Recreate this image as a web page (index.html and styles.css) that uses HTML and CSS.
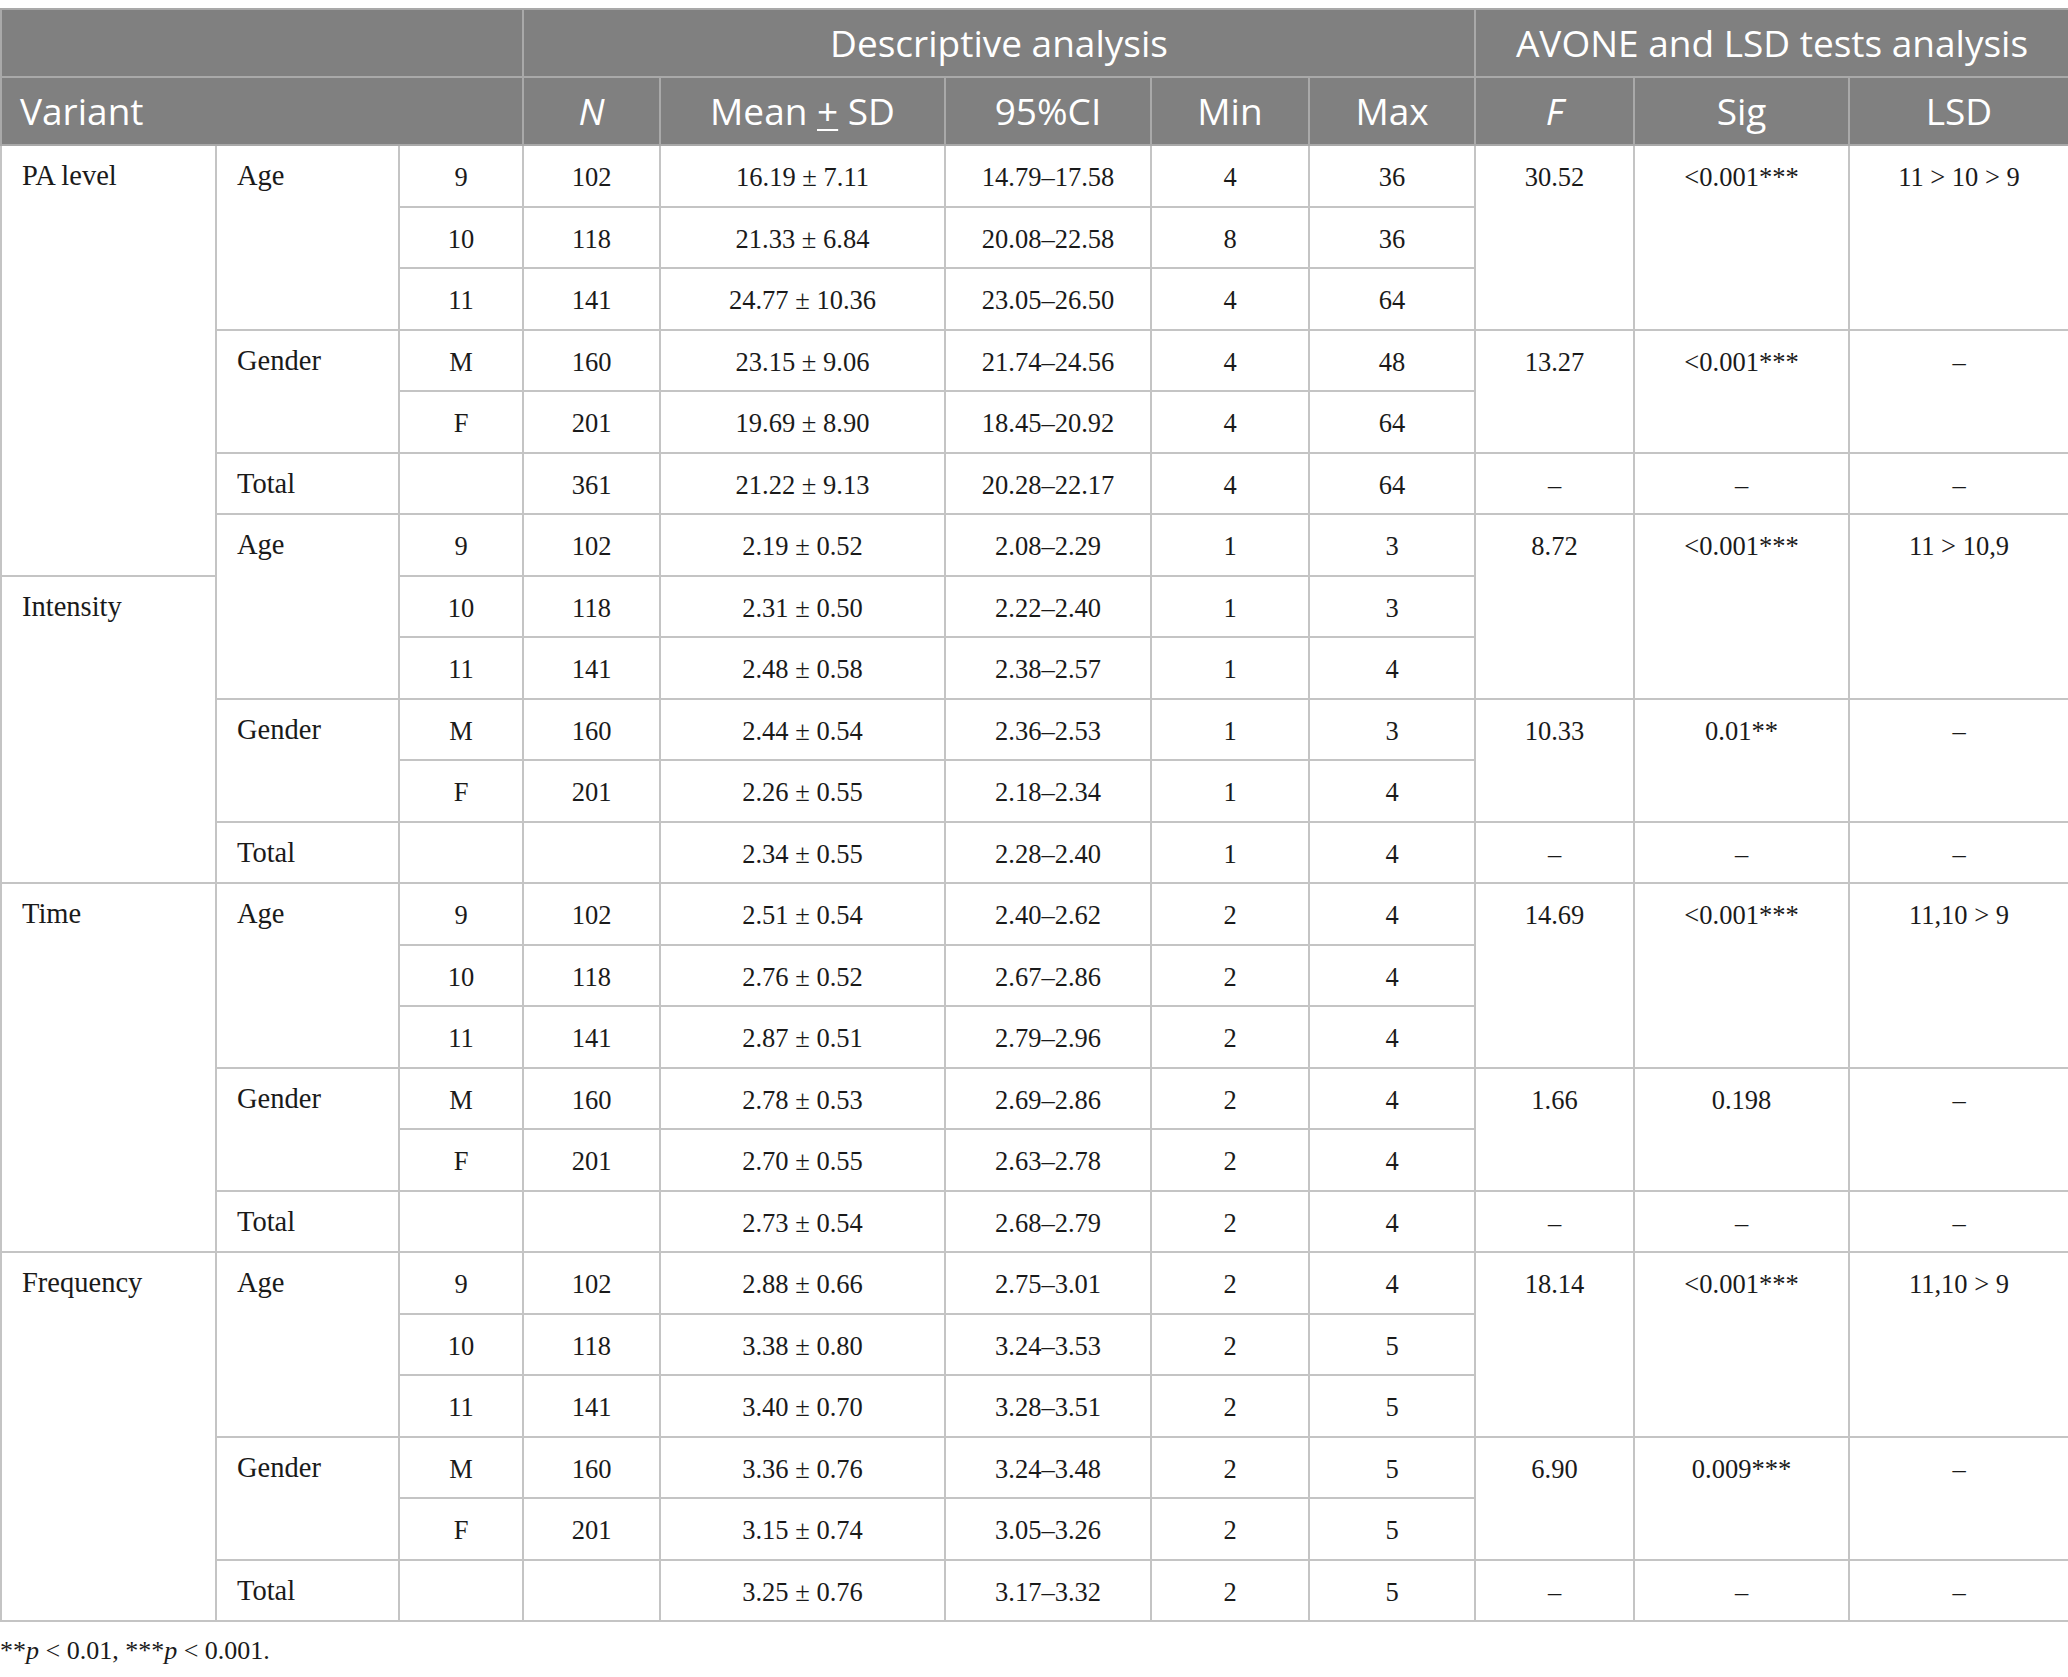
FILE: index.html
```html
<!DOCTYPE html>
<html lang="en">
<head>
<meta charset="utf-8">
<title>Descriptive analysis table</title>
<link rel="stylesheet" href="styles.css">
</head>
<body>
<div class="wrap">
<table class="data">
  <colgroup>
    <col class="c1"><col class="c2"><col class="c3"><col class="c4"><col class="c5"><col class="c6"><col class="c7"><col class="c8"><col class="c9"><col class="c10"><col class="c11">
  </colgroup>
  <thead>
    <tr class="h1">
      <th colspan="3"></th>
      <th colspan="5">Descriptive analysis</th>
      <th colspan="3">AVONE and LSD tests analysis</th>
    </tr>
    <tr class="h2">
      <th colspan="3" class="left">Variant</th>
      <th><i>N</i></th>
      <th>Mean <u>+</u> SD</th>
      <th>95%CI</th>
      <th>Min</th>
      <th>Max</th>
      <th><i>F</i></th>
      <th>Sig</th>
      <th>LSD</th>
    </tr>
  </thead>
  <tbody>
    <tr><td rowspan="7" class="left">PA level</td><td rowspan="3" class="left">Age</td><td>9</td><td>102</td><td>16.19 ± 7.11</td><td>14.79–17.58</td><td>4</td><td>36</td><td rowspan="3">30.52</td><td rowspan="3">&lt;0.001***</td><td rowspan="3">11 &gt; 10 &gt; 9</td></tr>
    <tr><td>10</td><td>118</td><td>21.33 ± 6.84</td><td>20.08–22.58</td><td>8</td><td>36</td></tr>
    <tr><td>11</td><td>141</td><td>24.77 ± 10.36</td><td>23.05–26.50</td><td>4</td><td>64</td></tr>
    <tr><td rowspan="2" class="left">Gender</td><td>M</td><td>160</td><td>23.15 ± 9.06</td><td>21.74–24.56</td><td>4</td><td>48</td><td rowspan="2">13.27</td><td rowspan="2">&lt;0.001***</td><td rowspan="2">–</td></tr>
    <tr><td>F</td><td>201</td><td>19.69 ± 8.90</td><td>18.45–20.92</td><td>4</td><td>64</td></tr>
    <tr><td class="left">Total</td><td></td><td>361</td><td>21.22 ± 9.13</td><td>20.28–22.17</td><td>4</td><td>64</td><td>–</td><td>–</td><td>–</td></tr>
    <tr><td rowspan="3" class="left">Age</td><td>9</td><td>102</td><td>2.19 ± 0.52</td><td>2.08–2.29</td><td>1</td><td>3</td><td rowspan="3">8.72</td><td rowspan="3">&lt;0.001***</td><td rowspan="3">11 &gt; 10,9</td></tr>
    <tr><td rowspan="5" class="left">Intensity</td><td>10</td><td>118</td><td>2.31 ± 0.50</td><td>2.22–2.40</td><td>1</td><td>3</td></tr>
    <tr><td>11</td><td>141</td><td>2.48 ± 0.58</td><td>2.38–2.57</td><td>1</td><td>4</td></tr>
    <tr><td rowspan="2" class="left">Gender</td><td>M</td><td>160</td><td>2.44 ± 0.54</td><td>2.36–2.53</td><td>1</td><td>3</td><td rowspan="2">10.33</td><td rowspan="2">0.01**</td><td rowspan="2">–</td></tr>
    <tr><td>F</td><td>201</td><td>2.26 ± 0.55</td><td>2.18–2.34</td><td>1</td><td>4</td></tr>
    <tr><td class="left">Total</td><td></td><td></td><td>2.34 ± 0.55</td><td>2.28–2.40</td><td>1</td><td>4</td><td>–</td><td>–</td><td>–</td></tr>
    <tr><td rowspan="6" class="left">Time</td><td rowspan="3" class="left">Age</td><td>9</td><td>102</td><td>2.51 ± 0.54</td><td>2.40–2.62</td><td>2</td><td>4</td><td rowspan="3">14.69</td><td rowspan="3">&lt;0.001***</td><td rowspan="3">11,10 &gt; 9</td></tr>
    <tr><td>10</td><td>118</td><td>2.76 ± 0.52</td><td>2.67–2.86</td><td>2</td><td>4</td></tr>
    <tr><td>11</td><td>141</td><td>2.87 ± 0.51</td><td>2.79–2.96</td><td>2</td><td>4</td></tr>
    <tr><td rowspan="2" class="left">Gender</td><td>M</td><td>160</td><td>2.78 ± 0.53</td><td>2.69–2.86</td><td>2</td><td>4</td><td rowspan="2">1.66</td><td rowspan="2">0.198</td><td rowspan="2">–</td></tr>
    <tr><td>F</td><td>201</td><td>2.70 ± 0.55</td><td>2.63–2.78</td><td>2</td><td>4</td></tr>
    <tr><td class="left">Total</td><td></td><td></td><td>2.73 ± 0.54</td><td>2.68–2.79</td><td>2</td><td>4</td><td>–</td><td>–</td><td>–</td></tr>
    <tr><td rowspan="6" class="left">Frequency</td><td rowspan="3" class="left">Age</td><td>9</td><td>102</td><td>2.88 ± 0.66</td><td>2.75–3.01</td><td>2</td><td>4</td><td rowspan="3">18.14</td><td rowspan="3">&lt;0.001***</td><td rowspan="3">11,10 &gt; 9</td></tr>
    <tr><td>10</td><td>118</td><td>3.38 ± 0.80</td><td>3.24–3.53</td><td>2</td><td>5</td></tr>
    <tr><td>11</td><td>141</td><td>3.40 ± 0.70</td><td>3.28–3.51</td><td>2</td><td>5</td></tr>
    <tr><td rowspan="2" class="left">Gender</td><td>M</td><td>160</td><td>3.36 ± 0.76</td><td>3.24–3.48</td><td>2</td><td>5</td><td rowspan="2">6.90</td><td rowspan="2">0.009***</td><td rowspan="2">–</td></tr>
    <tr><td>F</td><td>201</td><td>3.15 ± 0.74</td><td>3.05–3.26</td><td>2</td><td>5</td></tr>
    <tr><td class="left">Total</td><td></td><td></td><td>3.25 ± 0.76</td><td>3.17–3.32</td><td>2</td><td>5</td><td>–</td><td>–</td><td>–</td></tr>
  </tbody>
</table>
<p class="note">**<i>p</i> &lt; 0.01, ***<i>p</i> &lt; 0.001.</p>
</div>
</body>
</html>
```

FILE: styles.css
```css
html, body {
  margin: 0;
  padding: 0;
  background: #ffffff;
}

.wrap {
  padding-top: 8px;
  width: 2068px;
}

.data {
  width: 2068px;
  table-layout: fixed;
  border-collapse: collapse;
  border: 2px solid #bdbdbd;
}

.c1 { width: 215px; }
.c2 { width: 183px; }
.c3 { width: 124px; }
.c4 { width: 137px; }
.c5 { width: 285px; }
.c6 { width: 206px; }
.c7 { width: 158px; }
.c8 { width: 166px; }
.c9 { width: 159px; }
.c10 { width: 215px; }
.c11 { width: 220px; }

.data th {
  background: #808080;
  color: #ffffff;
  font-family: "Open Sans", "Noto Sans", sans-serif;
  font-weight: 400;
  font-size: 37px;
  line-height: 46px;
  text-align: center;
  vertical-align: middle;
  border: 2px solid #a9a9a9;
  padding: 0 8px;
  white-space: nowrap;
}

.data th.left {
  text-align: left;
  padding-left: 18px;
}

.data th u {
  text-decoration-thickness: 2px;
  text-underline-offset: 4px;
}

.h1, .h2 {
  height: 68px;
}

.data td {
  font-family: "Liberation Serif", "Times New Roman", serif;
  font-size: 26.5px;
  line-height: 30px;
  color: #1a1a1a;
  text-align: center;
  vertical-align: top;
  border: 2px solid #c4c4c4;
  padding: 16px 8px 0 8px;
  white-space: nowrap;
}

.data td.left {
  text-align: left;
  padding-left: 20px;
  font-size: 28.5px;
  padding-top: 15px;
}

.data tbody tr {
  height: 61.5px;
}

.note {
  margin: 14px 0 0 0;
  font-family: "Liberation Serif", "Times New Roman", serif;
  font-size: 26px;
  line-height: 30px;
  color: #1a1a1a;
}
```
